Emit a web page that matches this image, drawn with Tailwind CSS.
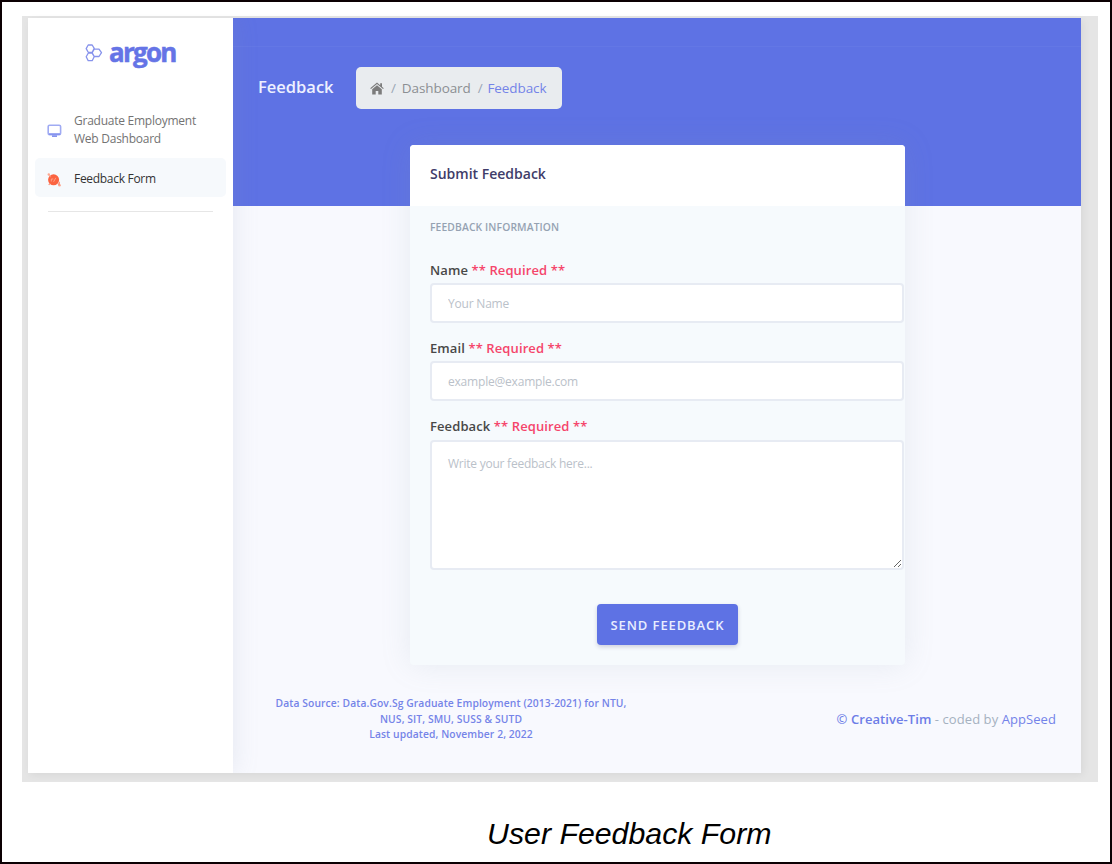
<!DOCTYPE html>
<html lang="en">
<head>
<meta charset="utf-8">
<title>User Feedback Form</title>
<script src="https://cdn.jsdelivr.net/npm/@tailwindcss/browser@4"></script>
</head>
<body class="h-[864px] w-[1112px] overflow-hidden border-2 border-[#0c0003] bg-white font-['Open_Sans',sans-serif]">
<main class="ml-5 mt-[14px] h-[766px] w-[1076px] bg-[#e5e5e5] pl-[6px] pt-[2px]">
  <div class="flex h-[755px] w-[1053px] overflow-hidden bg-[#f8f9fe] shadow-[2px_2px_8px_rgba(0,0,0,0.06)]">
    <aside class="z-10 h-full w-[205px] shrink-0 bg-white px-[7px] pt-[20px] shadow-[0_0_24px_rgba(136,152,170,0.18)]">
      <div class="flex h-[30px] items-center pl-[50px]">
        <svg class="size-[18px] shrink-0" viewBox="0 0 18 18" fill="none" stroke="#8793ec" stroke-width="1.3" stroke-linejoin="round">
          <path d="M3.2 1h4l2 3.4-2 3.9h-4L1.2 4.6zM3.2 9.2h4l2 3.6-2 3.9h-4l-2-3.9zM9.2 5.2h4.8l2.5 3.5-2.5 3.8H9.2L7.2 8.7z"/>
        </svg>
        <span class="-mt-[3px] ml-[6px] text-[26px] font-bold leading-[30px] tracking-[-1.75px] text-[#6574e6] [-webkit-text-stroke:0.5px_#6574e6]">argon</span>
      </div>
      <nav class="mt-[44px] text-[12px] leading-[18px] tracking-[-0.25px]">
        <a class="flex items-center pl-3 text-[#737373]">
          <svg class="mt-[2px] h-[14px] w-[15px]" viewBox="0 0 15 14"><rect x="1.2" y="1.2" width="12.4" height="9.4" rx="1.4" fill="none" stroke="#a0abf3" stroke-width="1.6"/><path d="M2 10.2h11M5 12.2h5" stroke="#8794ee" stroke-width="1.8"/></svg>
          <span class="ml-3">Graduate Employment<br>Web Dashboard</span>
        </a>
        <a class="mt-[10px] flex h-[39px] w-[191px] items-center rounded-[5px] bg-[#f6f9fc] pl-3 pt-[2px] text-[#333333]">
          <svg class="mt-[2px] h-[14px] w-[15px]" viewBox="0 0 15 14" fill="none"><circle cx="6.6" cy="6.8" r="5.5" fill="#fb6340"/><circle cx="1.8" cy="1.5" r="1.2" fill="#fda68f"/><circle cx="12.5" cy="12.2" r="1.3" fill="#fda68f"/><path d="M2.2 2.8L4 4M11 10.7l1.5 1.2M12.3 8.8v2.4M1.7 11.8l1.5-1.5" stroke="#fb8b70" stroke-width="1.1"/><path d="M4.3 8.5V6h2M8.8 4.8L6.6 8.8" stroke="#fda68f" stroke-width=".9"/></svg>
          <span class="ml-3 tracking-[-0.3px]">Feedback Form</span>
        </a>
      </nav>
      <div class="ml-[13px] mt-[14px] h-px w-[165px] bg-[#e6e6e6]"></div>
    </aside>
    <section class="grid h-full flex-1 grid-rows-[188px_1fr]">
      <header class="col-start-1 row-start-1 bg-[#5e72e4]">
        <div class="h-[29px] border-b border-[#6377e5]"></div>
        <div class="mt-5 flex h-[42px] items-center pl-[25px]">
          <h1 class="w-[98px] pb-[2px] text-[16.5px] font-semibold leading-none text-[#edf0ff]">Feedback</h1>
          <div class="flex h-[42px] w-[206px] items-center rounded-[5px] bg-[#e9ecef] pl-[14px] text-[13.5px] tracking-[-0.1px] text-[#8c8f93]">
            <svg class="h-[13px] w-[14px]" viewBox="0 0 14 13" fill="#7c7c7c"><path d="M7 .4 .2 6.2l.8.9L7 2.1l6 5 .8-.9L12 4.7V1.2h-1.8v2z"/><path d="M7 3.2 2.2 7.2v5.3h3.5V9h2.6v3.5h3.5V7.2z"/></svg>
            <span class="ml-[7px] text-[#9aa7b5]">/</span><span class="ml-[6px]">Dashboard</span><span class="ml-[7px] text-[#9aa7b5]">/</span><span class="ml-[5px] text-[#7483e8]">Feedback</span>
          </div>
        </div>
      </header>
      <div class="z-[1] col-start-1 row-span-2 row-start-1 flex flex-col pt-[127px]">
        <article class="ml-[177px] h-[520px] w-[495px] rounded-[4px] bg-[#f6fafd] shadow-[0_0_30px_rgba(136,152,170,0.15)]">
          <h2 class="flex h-[61px] items-center rounded-t-[4px] bg-white pb-1 pl-5 text-[14px] font-semibold text-[#403c69]">Submit Feedback</h2>
          <form class="flex flex-col pl-5 text-[13px] leading-[18px] text-[#484848]">
            <h3 class="mt-[12px] text-[10.3px] font-semibold leading-[18px] tracking-[0.13px] text-[#95a2b2]">FEEDBACK INFORMATION</h3>
            <label class="mt-[25px] font-semibold tracking-[0.1px]">Name <span class="text-[#f5456b]">** Required **</span></label>
            <input placeholder="Your Name" class="mt-[4px] h-[40px] w-[474px] rounded-[4px] border-2 border-[#e7ebf3] bg-white px-4 pt-px text-[12px] tracking-[-0.2px] placeholder:text-[#bac1c9]">
            <label class="mt-[16px] font-semibold tracking-[0.1px]">Email <span class="text-[#f5456b]">** Required **</span></label>
            <input placeholder="example@example.com" class="mt-[4px] h-[40px] w-[474px] rounded-[4px] border-2 border-[#e7ebf3] bg-white px-4 pt-px text-[12px] tracking-[-0.2px] placeholder:text-[#bac1c9]">
            <label class="mt-[16px] font-semibold tracking-[0.1px]">Feedback <span class="text-[#f5456b]">** Required **</span></label>
            <textarea placeholder="Write your feedback here..." class="mt-[5px] h-[130px] w-[474px] rounded-[4px] border-2 border-[#e7ebf3] bg-white px-4 py-[13px] text-[12px] tracking-[-0.24px] placeholder:text-[#bac1c9]"></textarea>
            <button type="button" class="ml-[167px] mt-[34px] h-[41px] w-[141px] whitespace-nowrap rounded-[4px] bg-[#5e72e4] pt-px text-[13px] font-semibold tracking-[0.9px] text-[#e9edff] shadow-[0_2px_4px_rgba(50,50,93,0.2)]">SEND FEEDBACK</button>
          </form>
        </article>
        <footer class="mt-[31px] flex">
          <p class="ml-[33px] w-[370px] text-center text-[10.3px] font-semibold leading-[15.5px] tracking-[0.1px] text-[#7584e8]">Data Source: Data.Gov.Sg Graduate Employment (2013-2021) for NTU,<br>NUS, SIT, SMU, SUSS &amp; SUTD<br>Last updated, November 2, 2022</p>
          <p class="ml-auto mr-[25px] mt-[13px] text-[13px] leading-[20px] tracking-[0.07px] text-[#a5b1c0]"><span class="font-semibold text-[#6d7de7]">© Creative-Tim</span> - coded by <span class="text-[#7383e9]">AppSeed</span></p>
        </footer>
      </div>
    </section>
  </div>
</main>
<p class="ml-[485px] mt-[34px] whitespace-nowrap font-['Liberation_Sans',sans-serif] text-[30.3px] italic leading-[36px] text-black">User Feedback Form</p>
</body>
</html>
